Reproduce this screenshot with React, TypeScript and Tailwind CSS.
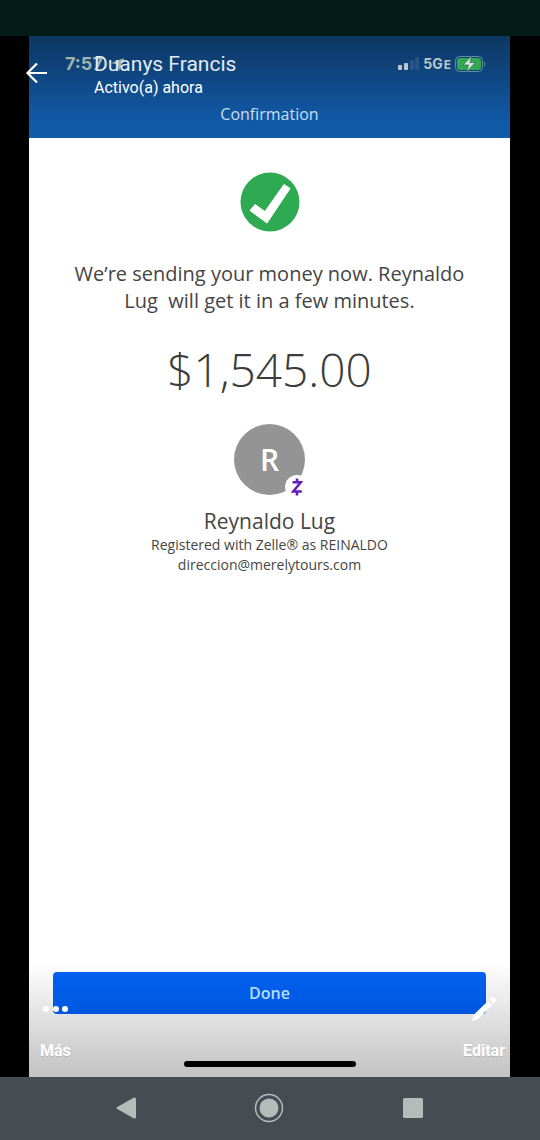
import React from 'react';

// Signal, network and battery of the shared phone screen
const StatusIcons: React.FC = () => (
  <div className="flex items-center gap-1 text-[#b9c6cb]">
    <svg width="22" height="14" viewBox="0 0 22 14" fill="currentColor" aria-hidden="true">
      <rect x="1" y="8" width="4" height="5" rx="1" />
      <rect x="7" y="6" width="4" height="7" rx="1" />
      <rect x="13" y="3" width="4" height="10" rx="1" opacity="0.15" />
      <rect x="18" y="0" width="4" height="13" rx="1" opacity="0.15" />
    </svg>
    <span className="font-['Inter',sans-serif] text-sm leading-4 font-bold">
      5G<span className="ml-px text-xs">E</span>
    </span>
    <svg width="31" height="16" viewBox="0 0 31 16" aria-hidden="true">
      <rect x="0.5" y="0.5" width="27" height="15" rx="4" fill="none" stroke="#5f8fa5" />
      <rect x="2" y="2" width="24" height="12" rx="3" fill="#32a852" />
      <path d="M29 5.5c1.3.5 1.3 4.500 0 5z" fill="#5f8fa5" />
      <path d="M16.500 0L8 9h5.500L11.500 16L20.500 6.500H15z" fill="#d5dfdc" stroke="#24704f" strokeWidth="0.7" />
    </svg>
  </div>
);

const Recipient: React.FC = () => (
  <section className="mt-6 flex flex-col items-center text-[#454545]">
    <div className="relative flex size-[71px] items-center justify-center rounded-full bg-[#949494]">
      <span className="text-3xl font-semibold text-white">R</span>
      <span className="absolute -right-1 -bottom-1 flex size-6 items-center justify-center rounded-full bg-white">
        <svg width="12" height="18" viewBox="0 0 12 18" fill="none" stroke="#6420b8" strokeWidth="2.600" aria-label="Zelle">
          <path d="M1.500 4.200H9.800L2.200 13.500H10.800M6 0.500V4.200M6 13.500V17.500" />
        </svg>
      </span>
    </div>
    <h2 className="mt-3 text-[21px] leading-7">Reynaldo Lug</h2>
    <p className="text-center text-sm leading-5">
      Registered with Zelle® as REINALDO
      <br />
      direccion@merelytours.com
    </p>
  </section>
);

const SharedScreen: React.FC = () => (
  <div className="flex flex-1 flex-col bg-white font-['Open_Sans',sans-serif]">
    <header className="flex flex-col bg-linear-to-b from-[#0d3763] to-[#115aa8] to-85% px-6 pt-4 pb-3">
      <div className="flex h-6 items-center justify-between pl-3">
        <span className="flex items-center gap-2 font-['Inter',sans-serif] text-lg leading-6 font-bold text-[#9fb2ae]">
          7:57
          <svg width="13" height="13" viewBox="0 0 13 13" fill="currentColor" aria-hidden="true">
            <path d="M13 0L8 13L6.500 6.500L0 5z" />
          </svg>
        </span>
        <StatusIcons />
      </div>
      <h1 className="mt-[26px] text-center text-base leading-6 text-[#c6dff3]">Confirmation</h1>
    </header>

    <main className="flex flex-1 flex-col items-center px-6 pt-8">
      <svg className="mt-0.5" width="60" height="60" viewBox="0 0 60 60" aria-hidden="true">
        <circle cx="30" cy="30" r="29.500" fill="#2daa52" />
        <path
          d="M15 32.500L25 39.500L44 12.500L50 16.500L27 51L10 38.500z"
          fill="#fff"
          stroke="#fff"
          strokeWidth="1"
          strokeLinejoin="round"
        />
      </svg>
      <p className="mt-7 text-center text-xl leading-[27px] whitespace-pre-wrap text-[#454545]">
        {'We’re sending your money now. Reynaldo\nLug  will get it in a few minutes.'}
      </p>
      <p className="mt-6 text-[46px] leading-[62px] font-light text-[#3c3c3c]">$1,545.00</p>
      <Recipient />
    </main>

    <footer className="flex flex-col items-center bg-linear-to-b from-white from-5% to-[#c2c2c2] px-6 pt-4 pb-2.5">
      <button
        type="button"
        className="h-[42px] w-full rounded bg-linear-to-b from-[#0061f0] to-[#0057de] text-base font-semibold text-[#b9defb]"
      >
        Done
      </button>
      <div className="mt-[47px] h-1.5 w-[172px] rounded-full bg-black" />
    </footer>
  </div>
);

// Chat viewer controls laid over the shared picture
const ViewerControls: React.FC = () => (
  <>
    <div className="absolute top-4 left-6 flex items-start gap-[46px] font-['Roboto',sans-serif] text-white">
      <button type="button" aria-label="Atrás" className="mt-2">
        <svg width="24" height="24" viewBox="0 0 24 24" fill="none" stroke="currentColor" strokeWidth="2.200" aria-hidden="true">
          <path d="M23 13H4M13 3.500L3.500 13L13 22.500" />
        </svg>
      </button>
      <div>
        <p className="text-[21px] leading-6 text-[#e3ebf3]">Duanys Francis</p>
        <p className="text-base leading-6">Activo(a) ahora</p>
      </div>
    </div>
    <div className="absolute right-[35px] bottom-3.5 left-10 flex justify-between font-['Roboto',sans-serif] text-base leading-6 font-bold text-white">
      <button type="button" className="flex flex-col items-start gap-4">
        <svg className="ml-0.5" width="28" height="28" viewBox="0 0 28 28" fill="currentColor" aria-hidden="true">
          <circle cx="4" cy="14" r="3" />
          <circle cx="14" cy="14" r="3" />
          <circle cx="23" cy="14" r="3" />
        </svg>
        <span className="text-shadow-2xs">Más</span>
      </button>
      <button type="button" className="flex flex-col items-center gap-4">
        <svg width="28" height="28" viewBox="0 0 28 28" fill="currentColor" aria-hidden="true">
          <path d="M2 26L3.500 20L18 6L22 10L7.500 24.500zM19.500 4.500L21.500 2.500Q23 1 24.500 2.500L25.500 3.500Q27 5 25.500 6.500L23.500 8.500z" />
        </svg>
        <span className="text-shadow-2xs">Editar</span>
      </button>
    </div>
  </>
);

const NavigationBar: React.FC = () => (
  <nav className="grid h-[63px] grid-cols-[1fr_36px_1fr] items-center bg-[#454d52] pr-0.5 pb-0.5 text-[#b5babd]">
    <button type="button" aria-label="Volver" className="justify-self-center">
      <svg width="20" height="22" viewBox="0 0 20 22" fill="currentColor" aria-hidden="true">
        <path d="M0.800 10.200L18 0.500Q20 0 20 2V20Q20 22 18 21.500L0.800 11.800Q0 11 0.800 10.200z" />
      </svg>
    </button>
    <button type="button" aria-label="Inicio" className="justify-self-center">
      <svg width="30" height="30" viewBox="0 0 30 30" fill="currentColor" aria-hidden="true">
        <circle cx="15" cy="15" r="13.500" fill="none" stroke="currentColor" strokeWidth="1.500" />
        <circle cx="15" cy="15" r="9.500" />
      </svg>
    </button>
    <button type="button" aria-label="Recientes" className="justify-self-center">
      <svg width="20" height="20" viewBox="0 0 20 20" fill="currentColor" aria-hidden="true">
        <rect width="20" height="20" rx="1.500" />
      </svg>
    </button>
  </nav>
);

export default function App() {
  return (
    <div className="flex min-h-screen w-full flex-col bg-black">
      <div className="h-9 bg-[#031b17]" />
      <div className="relative flex flex-1 flex-col pr-[30px] pl-[29px]">
        <SharedScreen />
        <ViewerControls />
      </div>
      <NavigationBar />
    </div>
  );
}
